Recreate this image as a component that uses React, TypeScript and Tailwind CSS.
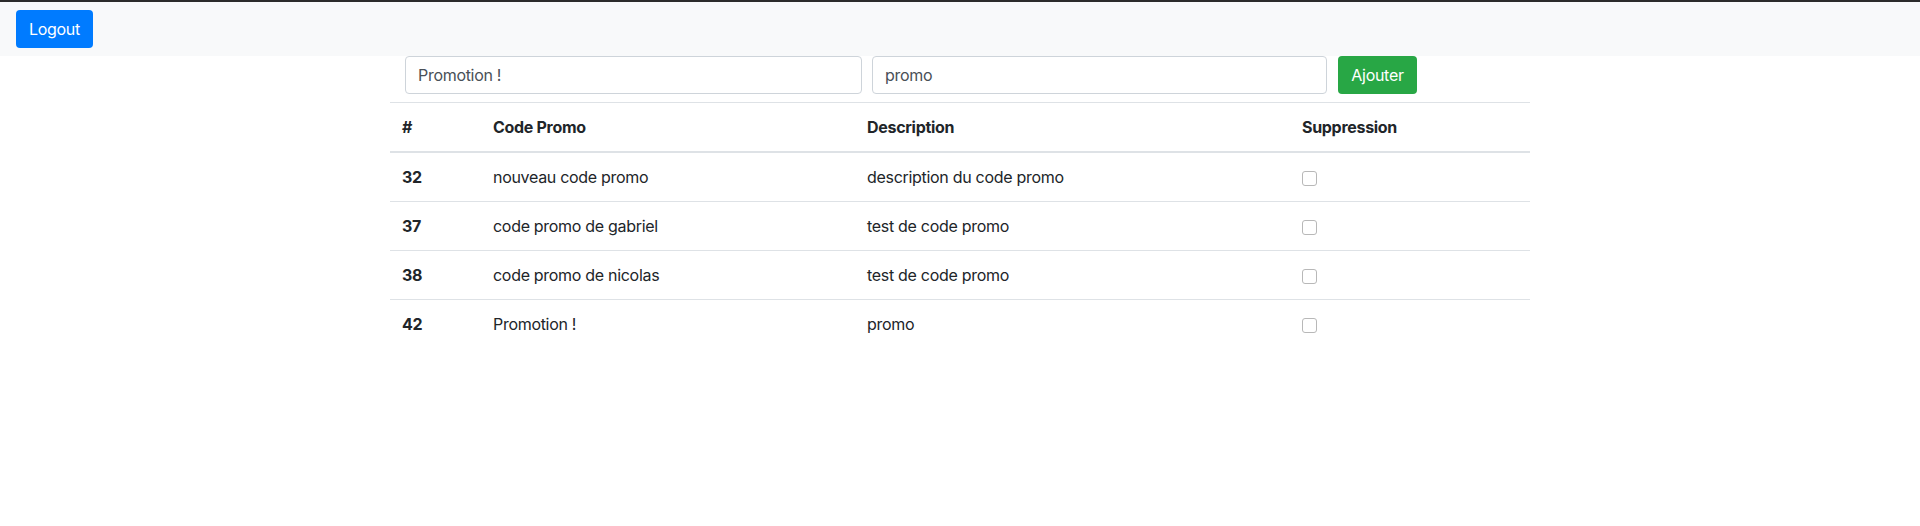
import { useState } from 'react';

type Promo = {
  id: number;
  code: string;
  description: string;
};

const initialPromos: Promo[] = [
  { id: 32, code: 'nouveau code promo', description: 'description du code promo' },
  { id: 37, code: 'code promo de gabriel', description: 'test de code promo' },
  { id: 38, code: 'code promo de nicolas', description: 'test de code promo' },
  { id: 42, code: 'Promotion !', description: 'promo' },
];

export default function App() {
  const [promos] = useState<Promo[]>(initialPromos);
  const [code, setCode] = useState<string>('Promotion !');
  const [description, setDescription] = useState<string>('promo');

  return (
    <div className="min-h-[526px] bg-white text-[#212529] font-['Inter','Liberation_Sans',sans-serif] text-base leading-6 tracking-[-0.3px]">
      {/* bord sombre en haut */}
      <div className="h-[2px] bg-[#2b2b2b]" />

      {/* Navbar */}
      <nav className="bg-[#f8f9fa] px-4 py-2 flex items-center">
        <button className="w-[77px] h-[38px] rounded-[4px] bg-[#007bff] text-white text-base tracking-[-0.3px]">
          Logout
        </button>
      </nav>

      <div className="w-[1140px] mx-auto">
        {/* Formulaire d'ajout */}
        <div className="flex items-center px-[15px] mb-2">
          <input
            value={code}
            onChange={(e) => setCode(e.target.value)}
            className="w-[457px] h-[38px] px-3 border border-[#ced4da] rounded-[4px] text-[#495057] tracking-[-0.3px] outline-none"
          />
          <input
            value={description}
            onChange={(e) => setDescription(e.target.value)}
            className="ml-[10px] w-[455px] h-[38px] px-3 border border-[#ced4da] rounded-[4px] text-[#495057] tracking-[-0.3px] outline-none"
          />
          <button className="ml-[11px] w-[79px] h-[38px] rounded-[4px] bg-[#28a745] text-white text-base tracking-[-0.3px]">
            Ajouter
          </button>
        </div>

        {/* Tableau des codes */}
        <table className="w-full border-collapse text-left">
          <thead>
            <tr>
              <th className="w-[91px] px-3 py-3 border-t border-b-2 border-[#dee2e6] font-bold">#</th>
              <th className="w-[374px] px-3 py-3 border-t border-b-2 border-[#dee2e6] font-bold">Code Promo</th>
              <th className="w-[435px] px-3 py-3 border-t border-b-2 border-[#dee2e6] font-bold">Description</th>
              <th className="px-3 py-3 border-t border-b-2 border-[#dee2e6] font-bold">Suppression</th>
            </tr>
          </thead>
          <tbody>
            {promos.map((promo, index) => (
              <tr key={promo.id}>
                <td className={`px-3 py-3 font-bold ${index > 0 ? 'border-t border-[#dee2e6]' : ''}`}>
                  {promo.id}
                </td>
                <td className={`px-3 py-3 ${index > 0 ? 'border-t border-[#dee2e6]' : ''}`}>{promo.code}</td>
                <td className={`px-3 py-3 ${index > 0 ? 'border-t border-[#dee2e6]' : ''}`}>
                  {promo.description}
                </td>
                <td className={`px-3 py-3 ${index > 0 ? 'border-t border-[#dee2e6]' : ''}`}>
                  <div className="flex items-center h-6">
                    <input
                      type="checkbox"
                      className="appearance-none w-[15px] h-[15px] mt-[3px] border border-[#b8b8b8] rounded-[3px] bg-white"
                    />
                  </div>
                </td>
              </tr>
            ))}
          </tbody>
        </table>
      </div>
    </div>
  );
}
